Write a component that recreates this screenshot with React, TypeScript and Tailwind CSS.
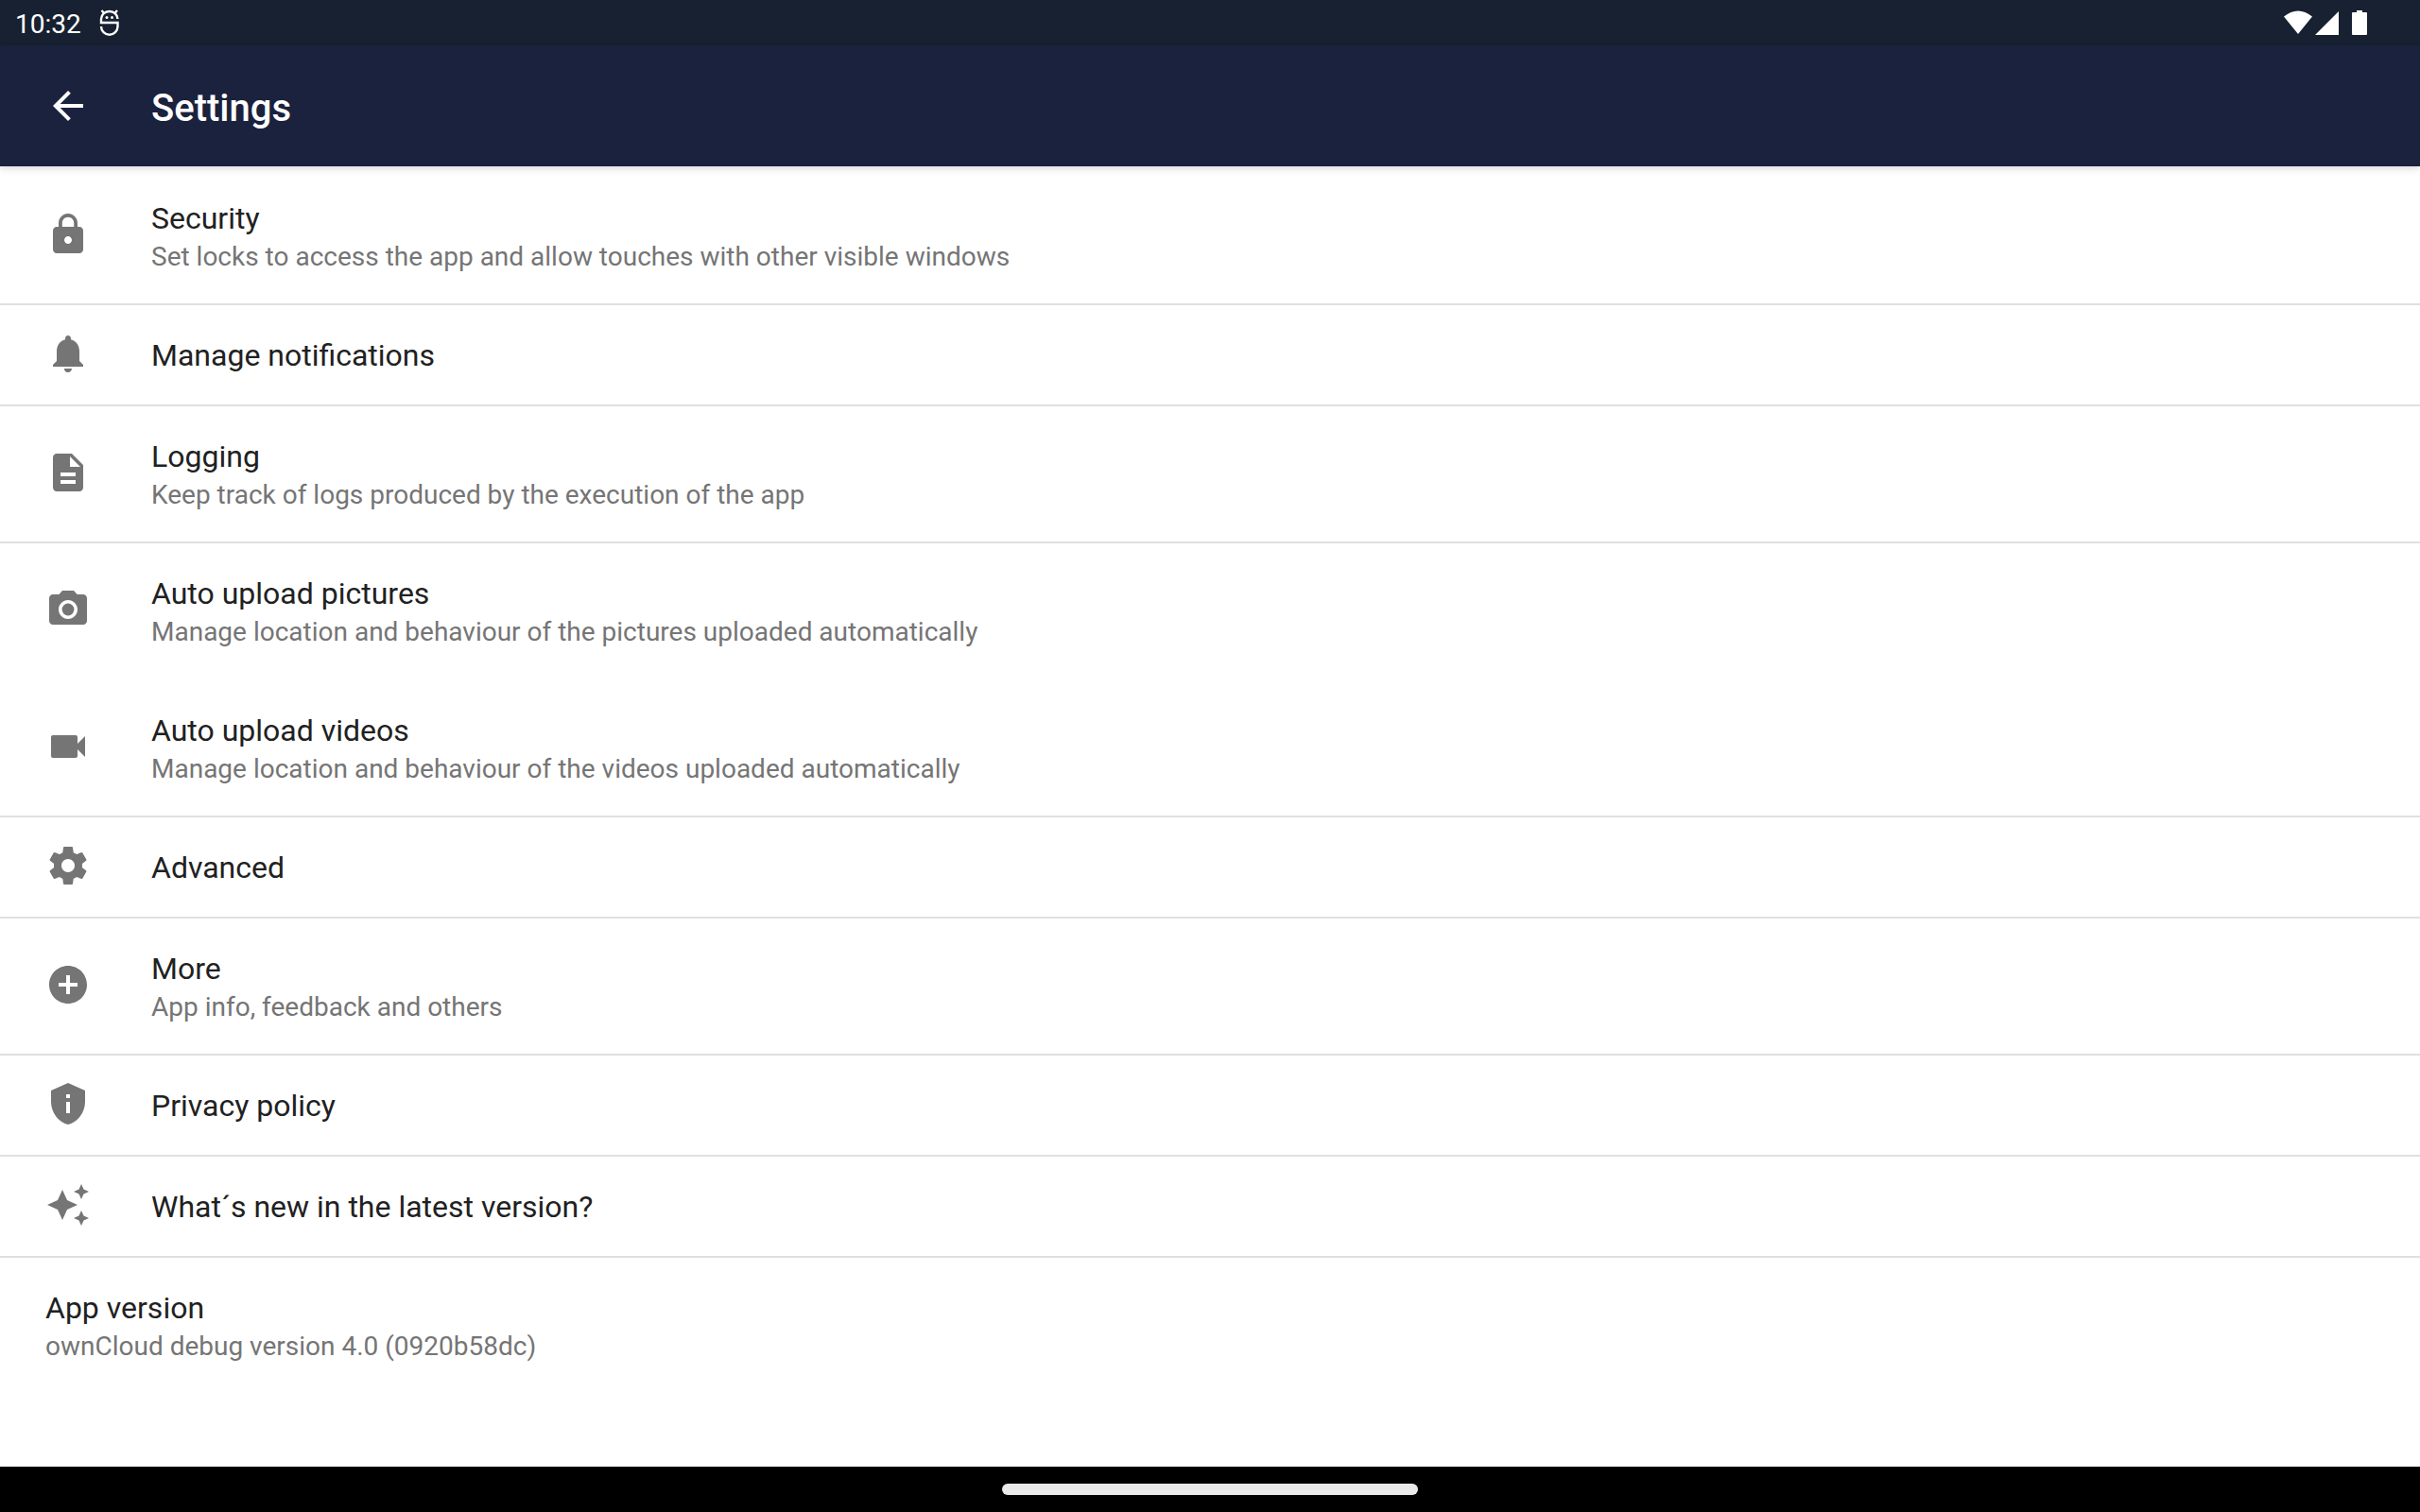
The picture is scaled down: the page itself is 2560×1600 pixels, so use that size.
import type { ReactNode } from "react";
import {
  MdAddCircle,
  MdArrowBack,
  MdAutoAwesome,
  MdDescription,
  MdLock,
  MdNotifications,
  MdPhotoCamera,
  MdPrivacyTip,
  MdVideocam,
} from "react-icons/md";

type SettingsItem = {
  title: string;
  summary?: string;
  icon?: ReactNode;
  divided?: boolean;
};

function GearIcon() {
  return (
    <svg viewBox="0 0 24 24" fill="currentColor" className="size-12">
      <path d="M19.43 12.98c.04-.32.07-.64.07-.98s-.03-.66-.07-.98l2.11-1.65c.19-.15.24-.42.12-.64l-2-3.46c-.12-.22-.39-.3-.61-.22l-2.49 1c-.52-.4-1.08-.73-1.69-.98l-.38-2.65C14.46 2.18 14.25 2 14 2h-4c-.25 0-.46.18-.49.42l-.38 2.65c-.61.25-1.17.59-1.69.98l-2.49-1c-.23-.09-.49 0-.61.22l-2 3.46c-.13.22-.07.49.12.64l2.11 1.65c-.04.32-.07.65-.07.98s.03.66.07.98l-2.11 1.65c-.19.15-.24.42-.12.64l2 3.46c.12.22.39.3.61.22l2.49-1c.52.4 1.08.73 1.69.98l.38 2.65c.03.24.24.42.49.42h4c.25 0 .46-.18.49-.42l.38-2.65c.61-.25 1.17-.59 1.69-.98l2.49 1c.23.09.49 0 .61-.22l2-3.46c.12-.22.07-.49-.12-.64l-2.11-1.65zM12 15.5c-1.93 0-3.5-1.57-3.5-3.5s1.57-3.5 3.5-3.5 3.5 1.57 3.5 3.5-1.57 3.5-3.5 3.5z" />
    </svg>
  );
}

const ITEMS: SettingsItem[] = [
  {
    title: "Security",
    summary: "Set locks to access the app and allow touches with other visible windows",
    icon: <MdLock className="size-12" />,
  },
  {
    title: "Manage notifications",
    icon: <MdNotifications className="size-12" />,
    divided: true,
  },
  {
    title: "Logging",
    summary: "Keep track of logs produced by the execution of the app",
    icon: <MdDescription className="size-12" />,
    divided: true,
  },
  {
    title: "Auto upload pictures",
    summary: "Manage location and behaviour of the pictures uploaded automatically",
    icon: <MdPhotoCamera className="size-12" />,
    divided: true,
  },
  {
    title: "Auto upload videos",
    summary: "Manage location and behaviour of the videos uploaded automatically",
    icon: <MdVideocam className="size-12" />,
  },
  { title: "Advanced", icon: <GearIcon />, divided: true },
  {
    title: "More",
    summary: "App info, feedback and others",
    icon: <MdAddCircle className="size-12" />,
    divided: true,
  },
  {
    title: "Privacy policy",
    icon: <MdPrivacyTip className="size-12" />,
    divided: true,
  },
  {
    title: "What´s new in the latest version?",
    icon: <MdAutoAwesome className="size-12" />,
    divided: true,
  },
  {
    title: "App version",
    summary: "ownCloud debug version 4.0 (0920b58dc)",
    divided: true,
  },
];

// S-shaped droid head shown while a debug build is running
function DebugIcon() {
  return (
    <svg
      viewBox="0 0 24 32"
      fill="none"
      stroke="currentColor"
      strokeWidth="2.4"
      className="h-8 w-6"
    >
      <path d="M20.500 12A8.750 8 0 0 0 3 12V16H20.500V20A8.750 8.750 0 0 1 3 20" />
      <path d="M3.500 3l3 3.500M20 3l-3 3.500" />
      <circle cx="9" cy="10.500" r="1.500" fill="currentColor" stroke="none" />
      <circle cx="14.500" cy="10.500" r="1.500" fill="currentColor" stroke="none" />
    </svg>
  );
}

function StatusBar() {
  return (
    <div className="flex h-12 items-center justify-between bg-[#172131] pr-14 pl-4 text-white">
      <div className="flex items-center gap-[18px]">
        <span className="pt-[3px] text-[28px] leading-8">10:32</span>
        <DebugIcon />
      </div>
      <svg viewBox="0 0 88 26" fill="currentColor" className="h-[26px] w-[88px]">
        <path d="M0 6.500Q15-5.500 30 6.500L15 25z" />
        <path d="M58 1v25H33z" />
        <path d="M77 0h6v2h4q1 0 1 1v22q0 1-1 1H73q-1 0-1-1V3q0-1 1-1h4z" />
      </svg>
    </div>
  );
}

function SettingsRow({ title, summary, icon, divided }: SettingsItem) {
  return (
    <li>
      <button
        type="button"
        className={`flex w-full items-center gap-16 px-12 text-left ${
          divided ? "shadow-[inset_0_2px_0_#e0e0e0]" : ""
        }`}
      >
        {icon && <span className="shrink-0 pb-px text-[#757575]">{icon}</span>}
        <span className="flex flex-col pt-[34px] pb-[30px]">
          <span className="text-[32px] leading-[43px] text-[#212121]">{title}</span>
          {summary && (
            <span className="text-[28px] leading-[38px] text-[#757575]">{summary}</span>
          )}
        </span>
      </button>
    </li>
  );
}

export default function App() {
  return (
    <div className="flex min-h-screen flex-col bg-white font-[Roboto,sans-serif]">
      <StatusBar />
      <header className="z-10 flex h-32 items-center gap-16 bg-[#1b223d] px-12 text-white shadow-[0_2px_8px_rgba(0,0,0,0.16)]">
        <button type="button" aria-label="Back">
          <MdArrowBack className="size-12" />
        </button>
        <h1 className="pt-1.5 text-[40px] leading-[48px] font-medium">Settings</h1>
      </header>
      <main className="grow">
        <ul>
          {ITEMS.map((item) => (
            <SettingsRow key={item.title} {...item} />
          ))}
        </ul>
      </main>
      <footer className="flex h-12 items-center justify-center bg-black">
        <button
          type="button"
          aria-label="Home"
          className="h-3 w-[440px] rounded-full bg-[#eaeaea]"
        />
      </footer>
    </div>
  );
}
